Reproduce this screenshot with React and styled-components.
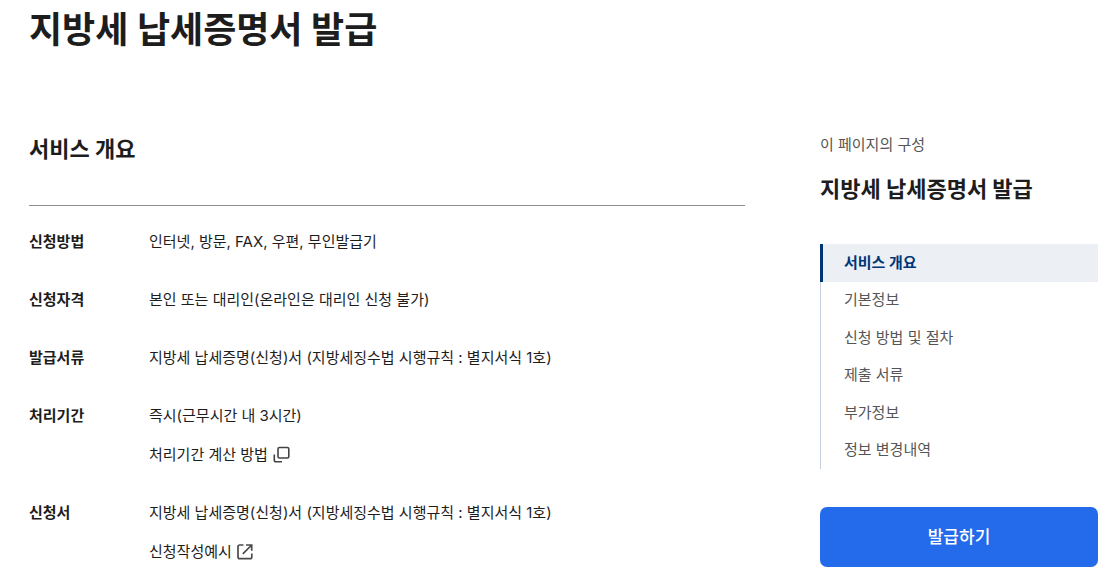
import React from "react";
import styled, { createGlobalStyle } from "styled-components";

const Global = createGlobalStyle`
  * { box-sizing: border-box; }
  body {
    margin: 0;
    background: #fff;
    color: #1d1d1d;
    font-family: Inter, "Noto Sans CJK KR", sans-serif;
    font-size: 15px;
    line-height: 24px;
  }
  h1, h2, h3, p, ul, dl, dd { margin: 0; padding: 0; }
`;

const Page = styled.div`
  padding: 0 8px 0 29px;
`;

const Title = styled.h1`
  font-size: 36px;
  line-height: 60px;
  font-weight: 700;
`;

const Columns = styled.div`
  display: flex;
  gap: 75px;
  padding-top: 73px;
`;

const Main = styled.main`
  flex: 1;
  min-width: 0;
`;

const SectionTitle = styled.h2`
  font-size: 22px;
  line-height: 32px;
  font-weight: 700;
`;

const Details = styled.dl`
  margin-top: 40px;
  padding-top: 24px;
  border-top: 1px solid #8e8e8e;
  display: grid;
  gap: 34px;
`;

const Row = styled.div`
  display: grid;
  grid-template-columns: 120px 1fr;
`;

const Term = styled.dt`
  font-weight: 700;
`;

const Value = styled.dd`
  display: grid;
  gap: 15px;
  justify-items: start;
`;

const InlineLink = styled.a`
  display: inline-flex;
  align-items: center;
  gap: 4px;
  color: inherit;
  text-decoration: none;
`;

const Aside = styled.aside`
  flex: 0 0 278px;
`;

const Caption = styled.p`
  color: #555;
`;

const AsideTitle = styled(SectionTitle)`
  margin-top: 16px;
`;

const NavList = styled.ul`
  list-style: none;
  margin: 39px 0 38px;
  min-height: 225px;
  display: grid;
  grid-auto-rows: 1fr;
  border-left: 1px solid #c6d0dc;
`;

const NavLink = styled.a`
  display: flex;
  align-items: center;
  height: 100%;
  padding-left: 23px;
  color: #555;
  text-decoration: none;
  ${(p) => p.$active && `
    margin-left: -1px;
    padding-left: 21px;
    border-left: 3px solid #003675;
    background: #eceff4;
    color: #003675;
    font-weight: 700;
  `}
`;

const IssueButton = styled.button`
  width: 100%;
  height: 60px;
  border: 0;
  border-radius: 7px;
  background: #246beb;
  color: #fff;
  font: inherit;
  font-size: 17px;
  font-weight: 500;
`;

const CopyIcon = () => (
  <svg width="18" height="18" viewBox="0 0 18 18" fill="none" stroke="#444" strokeWidth="1.6" aria-hidden="true">
    <rect x="6" y="1.500" width="10.800" height="10.500" rx="1.5" />
    <path d="M2.300 8.500V14Q2.300 15.800 4 15.800H10" />
  </svg>
);

const OpenIcon = () => (
  <svg width="18" height="18" viewBox="0 0 18 18" fill="none" stroke="#4a4a4a" strokeWidth="1.7" aria-hidden="true">
    <path d="M7.500 2H3.800Q2 2 2 3.800V14Q2 15.700 3.800 15.700H14Q15.800 15.700 15.800 14V10.500" />
    <path d="M10 2H15.700V7.700M15.700 2L6.800 10.900" />
  </svg>
);

const form = "지방세 납세증명(신청)서 (지방세징수법 시행규칙 : 별지서식 1호)";
const rows = [
  { term: "신청방법", text: "인터넷, 방문, FAX, 우편, 무인발급기" },
  { term: "신청자격", text: "본인 또는 대리인(온라인은 대리인 신청 불가)" },
  { term: "발급서류", text: form },
  { term: "처리기간", text: "즉시(근무시간 내 3시간)", link: "처리기간 계산 방법", Icon: CopyIcon },
  { term: "신청서", text: form, link: "신청작성예시", Icon: OpenIcon },
];
const sections = ["서비스 개요", "기본정보", "신청 방법 및 절차", "제출 서류", "부가정보", "정보 변경내역"];

export default function App() {
  return (
    <Page>
      <Global />
      <Title>지방세 납세증명서 발급</Title>
      <Columns>
        <Main>
          <SectionTitle>서비스 개요</SectionTitle>
          <Details>
            {rows.map(({ term, text, link, Icon }) => (
              <Row key={term}>
                <Term>{term}</Term>
                <Value>
                  <span>{text}</span>
                  {link && <InlineLink href="#">{link}<Icon /></InlineLink>}
                </Value>
              </Row>
            ))}
          </Details>
        </Main>
        <Aside>
          <Caption>이 페이지의 구성</Caption>
          <AsideTitle>지방세 납세증명서 발급</AsideTitle>
          <nav>
            <NavList>
              {sections.map((s, i) => (
                <li key={s}><NavLink href="#" $active={i === 0}>{s}</NavLink></li>
              ))}
            </NavList>
          </nav>
          <IssueButton type="button">발급하기</IssueButton>
        </Aside>
      </Columns>
    </Page>
  );
}
